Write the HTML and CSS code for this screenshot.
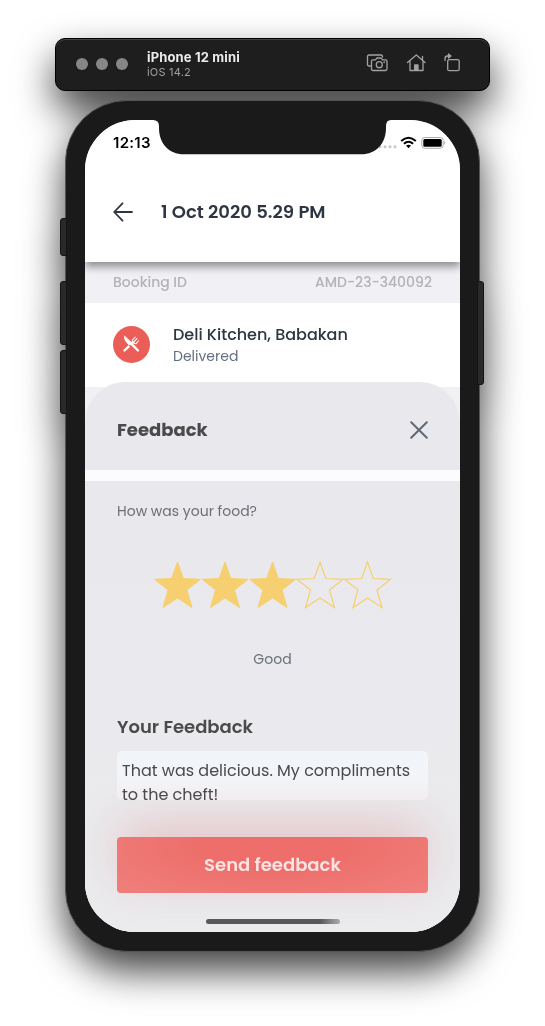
FILE: index.html
```html
<!DOCTYPE html>
<html lang="en">
<head>
<meta charset="utf-8">
<title>Feedback</title>
<link rel="stylesheet" href="styles.css">
</head>
<body>
<div class="simulator">
  <header class="toolbar">
    <div class="lights"><i></i><i></i><i></i></div>
    <div class="device-name"><strong>iPhone 12 mini</strong><span>iOS 14.2</span></div>
    <svg class="tools" width="96" height="22" viewBox="0 0 96 22" fill="none" stroke="#a2a2a2" stroke-width="1.3" stroke-linejoin="round" stroke-linecap="round">
      <path d="M4.500 14H3Q1.500 14 1.500 12.500V4.500Q1.500 3 3 3H15Q16.500 3 16.500 4.500V5"/>
      <path d="M7 7.800H9.500L11 6H15L16.500 7.800H19.500Q21 7.800 21 9.300V17Q21 18.500 19.500 18.500H7Q5.500 18.500 5.500 17V9.300Q5.500 7.800 7 7.800Z"/>
      <circle cx="13.300" cy="12.700" r="3"/><circle cx="18.300" cy="10.200" r=".3"/>
      <path d="M41.500 10.500L50.300 3L59 10.500M44 9V18.500H57V9M56.500 7.500V4.500"/>
      <path d="M48.700 18V13H52V18Z" fill="#a2a2a2"/>
      <rect x="81.700" y="7.700" width="11.500" height="11" rx="1.500"/>
      <path d="M79 8.500V6.500Q79 4 81.500 4H84"/><path d="M82.500 2L85 4L82.500 6Z" fill="#a2a2a2"/>
    </svg>
  </header>
  <main class="phone">
    <i class="key key-mute"></i><i class="key key-up"></i><i class="key key-down"></i><i class="key key-power"></i>
    <div class="screen">
      <svg class="notch" width="238" height="35" viewBox="0 0 238 35"><path d="M0 0Q6 0 6 6V8C6 23 15.500 34.300 31 34.300H208C223.500 34.300 233 23 233 8V6Q233 0 238 0Z" fill="#1a1a1a"/></svg>
      <section class="top">
        <div class="status">
          <span class="time">12:13</span>
          <svg width="70" height="16" viewBox="0 0 70 16">
            <g fill="#c5c5c5"><circle cx="4" cy="11.800" r="1.500"/><circle cx="9" cy="11.800" r="1.500"/><circle cx="14" cy="11.800" r="1.500"/><circle cx="19" cy="11.800" r="1.500"/></g>
            <g fill="none" stroke="#000" stroke-width="2"><path d="M25.200 6Q32.500-.6 39.800 6"/><path d="M27.900 8.800Q32.500 4.700 37.100 8.800"/></g>
            <path d="M30 10.600Q32.500 8.700 35 10.600L32.500 13.200Z"/>
            <rect x="45.800" y="2.500" width="21.400" height="10.800" rx="3" fill="none" stroke="#aaa"/><rect x="47.300" y="4" width="18.400" height="7.800" rx="1.500"/><path d="M68.300 5.800Q70.500 7.700 68.300 9.700Z" fill="#aaa"/>
          </svg>
        </div>
        <div class="nav">
          <svg width="20" height="20" viewBox="0 0 20 20" fill="none" stroke="#2d3642" stroke-width="1.800" stroke-linecap="round" stroke-linejoin="round"><path d="M19 10H1.200M9.500 1.300L1.200 10L9.500 18.700"/></svg>
          <h1>1 Oct 2020 5.29 PM</h1>
        </div>
      </section>
      <section class="booking"><span>Booking ID</span><span>AMD-23-340092</span></section>
      <section class="order">
        <svg width="37" height="37" viewBox="0 0 36 36"><circle cx="18" cy="18" r="18" fill="#eb5d57"/><g stroke="#fff" stroke-linecap="round" fill="none"><path d="M16.500 16L24.300 23.800" stroke-width="2.300"/><path d="M11.200 10.200Q10.300 13.500 15.800 18.500L18.500 16.800Z" fill="#fff" stroke-width=".8" stroke-linejoin="round"/><path d="M11.200 23.800L15.200 20" stroke-width="2.300"/><path d="M18.800 13.800Q19 17.200 22.500 17.200L24.800 14.300M18.800 13.800L21.700 10.800M20.500 15.200L23.300 12.300" stroke-width="1"/><path d="M18.500 17L20.300 15.600" stroke-width="1.600"/></g></svg>
        <div><h2>Deli Kitchen, Babakan</h2><p>Delivered</p></div>
      </section>
      <section class="sheet">
        <div class="sheet-head">
          <h3>Feedback</h3>
          <svg width="18" height="18" viewBox="0 0 18 18" stroke="#626973" stroke-width="2" stroke-linecap="round"><path d="M1.200 1.200L16.800 16.800M16.800 1.200L1.200 16.800"/></svg>
        </div>
        <div class="sheet-body">
          <p class="question">How was your food?</p>
          <svg class="stars" width="240" height="50" viewBox="0 0 240 50" stroke="#f6d070">
            <defs><path id="star" d="M24.500 2L30.300 18.500L47.500 19.300L34 30L39 47.500L24.500 38L10 47.500L15 30L1.500 19.300L18.700 18.500Z"/></defs>
            <g fill="#f6d070"><use href="#star"/><use href="#star" x="47.500"/><use href="#star" x="95"/></g>
            <g fill="none" stroke-width="1.200"><use href="#star" x="142.500"/><use href="#star" x="190"/></g>
          </svg>
          <p class="rating">Good</p>
          <h4>Your Feedback</h4>
          <div class="comment">That was delicious. My compliments<br>to the cheft!</div>
          <button class="send">Send feedback</button>
          <i class="home-bar"></i>
        </div>
      </section>
    </div>
  </main>
</div>
</body>
</html>
```
FILE: styles.css
```css
* { box-sizing: border-box; margin: 0; padding: 0; }
body { width: 545px; height: 1026px; overflow: hidden; background: #fff; font-family: Poppins, Inter, "Open Sans", sans-serif; }
svg { display: block; flex: none; }
.simulator { display: flex; flex-direction: column; align-items: center; gap: 9px; height: 1026px; padding-top: 38px; filter: drop-shadow(0 19px 19px rgba(0,0,0,.75)); }
.toolbar { display: flex; flex: none; align-items: center; width: 435px; height: 53px; padding: 0 27px 2px 20px; border: 1px solid #000; border-radius: 10px; background: #1e1e1e; box-shadow: inset 0 1px #444; font-family: Inter, sans-serif; }
.tools { margin-top: -1px; }
.lights { display: flex; gap: 8px; width: 71px; }
.lights i { width: 12px; height: 12px; border-radius: 50%; background: #878787; }
.device-name { display: flex; flex-direction: column; flex: 1; padding-top: 2px; }
.device-name strong { color: #ececec; font-size: 13px; line-height: 15px; font-weight: 700; letter-spacing: .15px; }
.device-name span { color: #a0a0a0; font-size: 11px; line-height: 14px; letter-spacing: .2px; }
.phone { position: relative; flex: none; width: 415px; height: 852px; padding: 19px; border: 1px solid #555; border-radius: 62px; background: #1a1a1a; }
.key { position: absolute; left: -6px; width: 7px; border: 1px solid #141414; border-radius: 3px 0 0 3px; background: #292929; }
.key-mute { top: 117px; height: 38px; }
.key-up { top: 180px; height: 64px; }
.key-down { top: 249px; height: 64px; }
.key-power { left: auto; right: -5px; top: 180px; height: 104px; border-radius: 0 3px 3px 0; }
.screen { position: relative; display: flex; flex-direction: column; width: 375px; height: 812px; overflow: hidden; border-radius: 50px; background: #f1f0f5; }
.notch { position: absolute; z-index: 3; left: 68px; top: 0; }
.top { position: relative; z-index: 1; flex: none; height: 142px; padding: 15px 14px 0 28px; background: #fff; box-shadow: 0 5px 8px rgba(0,0,0,.4); }
.status { display: flex; justify-content: space-between; height: 16px; }
.time { font: 600 15px/16px Inter, sans-serif; letter-spacing: .3px; }
.nav { display: flex; align-items: center; gap: 28px; height: 30px; margin-top: 46px; color: #2d3642; }
.nav h1 { font-size: 18px; line-height: 30px; font-weight: 600; white-space: nowrap; }
.booking { display: flex; flex: none; align-items: center; justify-content: space-between; height: 41px; padding: 0 28px; color: #b4b4b6; font-size: 14px; font-weight: 500; }
.order { display: flex; flex: none; align-items: center; gap: 23px; height: 84px; padding: 0 28px 2px; background: #fff; }
.order h2 { color: #2d3642; font-size: 16px; line-height: 24px; font-weight: 500; }
.order p { color: #626e83; font-size: 14px; line-height: 19px; }
.sheet { display: flex; flex-direction: column; gap: 11px; flex: 1; margin-top: -5px; border-radius: 40px 40px 0 0; overflow: hidden; background: #fcfcfc; color: #4a4a4b; }
.sheet-head { display: flex; flex: none; align-items: center; justify-content: space-between; height: 88px; padding: 7px 32px 0; background: #e9e9ed; }
.sheet-head h3 { font-size: 18px; line-height: 26px; font-weight: 700; }
.sheet-body { display: flex; flex-direction: column; flex: 1; padding: 20px 32px 0; background: linear-gradient(#e9e9ed, #ebebee); }
.question { color: #6a7077; font-size: 14px; line-height: 20px; }
.stars { margin: 39px 0 0 36px; }
.rating { margin-top: 39px; color: #6a7077; font-size: 14px; line-height: 20px; text-align: center; }
.sheet-body h4 { margin-top: 45px; font-size: 18px; line-height: 26px; font-weight: 600; }
.comment { position: relative; z-index: 1; height: 49px; margin-top: 11px; padding: 8px 5px 0; border-radius: 5px; background: linear-gradient(#f1f5fa, #f3f4f8 55%, #f2edf0); font-size: 16px; line-height: 24px; white-space: nowrap; }
.send { flex: none; height: 56px; margin-top: 37px; border: 0; border-radius: 4px; background: radial-gradient(ellipse 200px 65px at 50% 8px, #ed6e6b 35%, transparent), #ef7e7a; box-shadow: 0 -14px 50px -4px rgba(218,140,140,.46); color: #fbe3e3; font: 600 18px/56px Poppins, Inter, sans-serif; }
.home-bar { width: 134px; height: 5px; margin: 26px 0 0 89px; border-radius: 3px; background: linear-gradient(90deg, #5a595a 85%, #aaa); }
```
